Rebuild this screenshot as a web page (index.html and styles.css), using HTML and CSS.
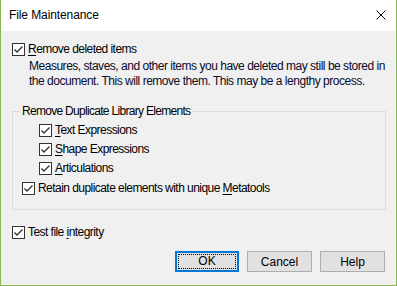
FILE: index.html
```html
<!DOCTYPE html>
<html lang="en">
<head>
  <meta charset="UTF-8">
  <title>File Maintenance</title>
  <link rel="stylesheet" href="styles.css">
</head>
<body>

<div class="window">
  <div class="titlebar">
    <span class="title">File Maintenance</span>
    <svg class="close" width="10" height="10" viewBox="0 0 10 10">
      <path d="M0.5 0.5 L9.5 9.5 M9.5 0.5 L0.5 9.5" stroke="#000" stroke-width="1" fill="none"/>
    </svg>
  </div>

  <div class="client">
    <label class="check">
      <svg class="box" width="13" height="13" viewBox="0 0 13 13"><rect x="0.5" y="0.5" width="12" height="12" fill="#fff" stroke="#333"/><path d="M2.5 6.5 L5 9 L10.5 3.5" stroke="#333" stroke-width="1.4" fill="none"/></svg>
      <span><u>R</u>emove deleted items</span>
    </label>
    <p class="desc">Measures, staves, and other items you have deleted may still be stored in<br>the document. This will remove them. This may be a lengthy process.</p>

    <fieldset class="group">
      <legend>Remove Duplicate Library Elements</legend>
      <label class="check sub first">
        <svg class="box" width="13" height="13" viewBox="0 0 13 13"><rect x="0.5" y="0.5" width="12" height="12" fill="#fff" stroke="#333"/><path d="M2.5 6.5 L5 9 L10.5 3.5" stroke="#333" stroke-width="1.4" fill="none"/></svg>
        <span><u>T</u>ext Expressions</span>
      </label>
      <label class="check sub">
        <svg class="box" width="13" height="13" viewBox="0 0 13 13"><rect x="0.5" y="0.5" width="12" height="12" fill="#fff" stroke="#333"/><path d="M2.5 6.5 L5 9 L10.5 3.5" stroke="#333" stroke-width="1.4" fill="none"/></svg>
        <span><u>S</u>hape Expressions</span>
      </label>
      <label class="check sub">
        <svg class="box" width="13" height="13" viewBox="0 0 13 13"><rect x="0.5" y="0.5" width="12" height="12" fill="#fff" stroke="#333"/><path d="M2.5 6.5 L5 9 L10.5 3.5" stroke="#333" stroke-width="1.4" fill="none"/></svg>
        <span><u>A</u>rticulations</span>
      </label>
      <label class="check retain">
        <svg class="box" width="13" height="13" viewBox="0 0 13 13"><rect x="0.5" y="0.5" width="12" height="12" fill="#fff" stroke="#333"/><path d="M2.5 6.5 L5 9 L10.5 3.5" stroke="#333" stroke-width="1.4" fill="none"/></svg>
        <span>Retain duplicate elements with unique <u>M</u>etatools</span>
      </label>
    </fieldset>

    <label class="check test">
      <svg class="box" width="13" height="13" viewBox="0 0 13 13"><rect x="0.5" y="0.5" width="12" height="12" fill="#fff" stroke="#333"/><path d="M2.5 6.5 L5 9 L10.5 3.5" stroke="#333" stroke-width="1.4" fill="none"/></svg>
      <span>Test file <u>i</u>ntegrity</span>
    </label>

    <div class="buttons">
      <button class="btn default"><span>OK</span></button>
      <button class="btn">Cancel</button>
      <button class="btn">Help</button>
    </div>
  </div>
</div>

</body>
</html>
```

FILE: styles.css
```css
body {
  margin: 0;
  padding: 0;
  font-family: "Liberation Sans", Arial, sans-serif;
  font-size: 12px;
  color: #000;
}
.window {
  width: 395px;
  height: 285px;
  border: 1px solid #8ab84a;
  border-top: none;
  background: #f0f0f0;
  display: flex;
  flex-direction: column;
  overflow: hidden;
}
.titlebar {
  height: 31px;
  background: #fff;
  display: flex;
  align-items: center;
  justify-content: space-between;
  padding: 0 10px 0 8px;
  flex-shrink: 0;
}
.title {
  font-size: 12px;
  margin-top: -1px;
  letter-spacing: -0.1px;
}
.close {
  margin-top: -1px;
}
.client {
  flex: 1;
  padding: 11px 11px 0 11px;
  display: flex;
  flex-direction: column;
}
.check {
  display: flex;
  align-items: center;
  height: 15px;
  line-height: 15px;
  gap: 3px;
  letter-spacing: -0.55px;
  white-space: nowrap;
}
.check u {
  text-decoration-thickness: 1px;
  text-underline-offset: 2px;
}
.box {
  flex-shrink: 0;
}
.desc {
  margin: 2px 0 0 17px;
  line-height: 15px;
  letter-spacing: -0.48px;
  white-space: nowrap;
  color: #0a0a2a;
}
.group {
  margin: 15px -1px 0 0;
  padding: 0 9px 13px 9px;
  border: 1px solid #dcdcdc;
  display: flex;
  flex-direction: column;
  gap: 4px;
  min-width: 0;
}
.group legend {
  margin-left: -2px;
  padding: 0 2px;
  line-height: 15px;
  letter-spacing: -0.7px;
}
.group .first {
  margin-top: 4px;
}
.group .retain {
  margin-top: 1px;
}
.sub {
  margin-left: 17px;
}
.test {
  margin-top: 15px;
}
.buttons {
  display: flex;
  justify-content: flex-end;
  gap: 8px;
  margin-top: 11px;
}
.btn {
  width: 65px;
  height: 21px;
  padding: 0;
  font-family: inherit;
  font-size: 12px;
  background: #e1e1e1;
  border: 1px solid #adadad;
  color: #000;
}
.btn.default {
  width: 64px;
  border: 2px solid #0078d7;
  padding: 1px;
}
.btn.default span {
  display: block;
  height: 100%;
  border: 1px dotted #000;
  box-sizing: border-box;
  line-height: 13px;
}
```
